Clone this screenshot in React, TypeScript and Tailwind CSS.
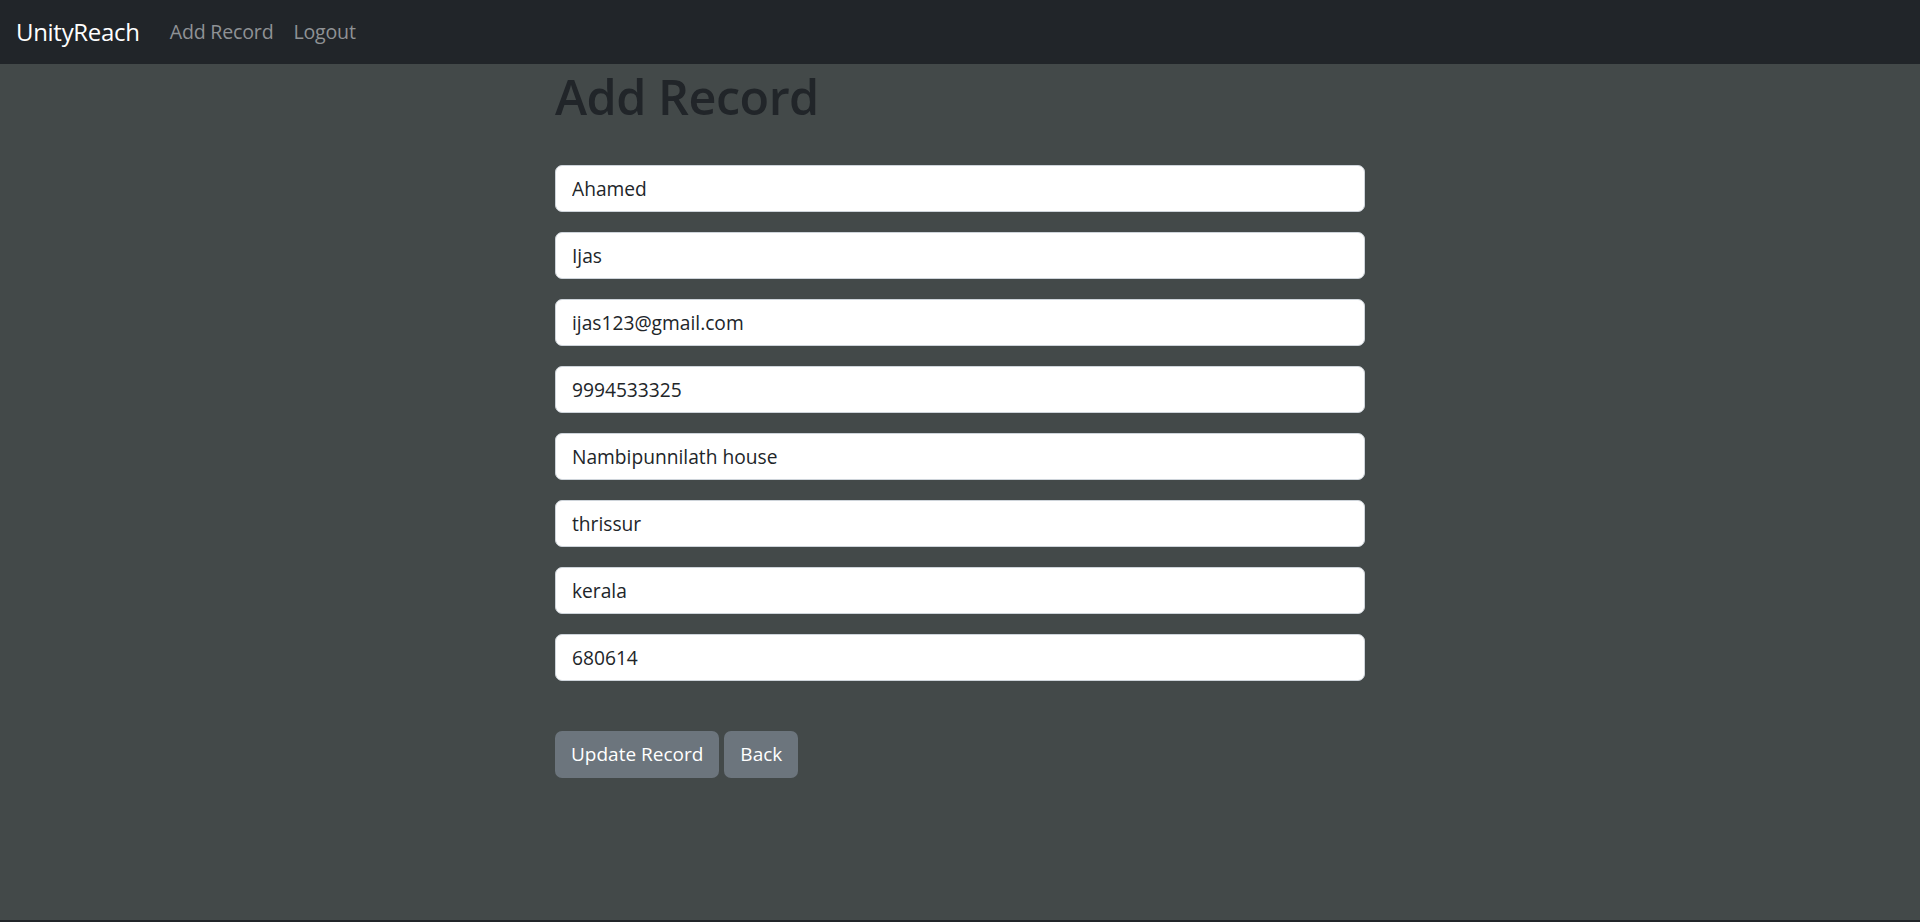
import React, { useState } from "react";

const font = { fontFamily: '"Open Sans", "Noto Sans", "Liberation Sans", sans-serif' };

const initialRecord = [
  "Ahamed",
  "Ijas",
  "ijas123@gmail.com",
  "9994533325",
  "Nambipunnilath house",
  "thrissur",
  "kerala",
  "680614",
];

/**
 * Top navigation bar
 */
const Navbar: React.FC = () => (
  <nav className="h-[64px] min-h-[64px] bg-[#212529] flex items-center px-4">
    <a href="#" className="text-[24px] text-white mr-[30px] tracking-[-0.3px]">
      UnityReach
    </a>
    <a href="#" className="text-[19.6px] text-[#8f9295] mr-[20px] tracking-[-0.2px]">
      Add Record
    </a>
    <a href="#" className="text-[19.6px] text-[#8f9295] tracking-[-0.2px]">
      Logout
    </a>
  </nav>
);

export default function App() {
  const [values, setValues] = useState(initialRecord);

  const update = (i: number, v: string) => {
    setValues((prev) => prev.map((p, idx) => (idx === i ? v : p)));
  };

  return (
    <div className="h-[922px] flex flex-col bg-[#212529]" style={font}>
      <Navbar />

      <main className="flex-1 bg-[#434949]">
        <div className="w-[810px] mx-auto">
          <h1 className="text-[48.5px] leading-[60px] font-semibold text-[#212529] tracking-[-0.5px] mt-[2px]">
            Add Record
          </h1>

          {/* Form fields */}
          <form className="mt-[39px] flex flex-col gap-[20px]" onSubmit={(e) => e.preventDefault()}>
            {values.map((v, i) => (
              <input
                key={i}
                type="text"
                value={v}
                onChange={(e) => update(i, e.target.value)}
                className="h-[47px] w-full bg-white border border-[#ced4da] rounded-[7px] px-[16px] text-[19.2px] text-[#212529] focus:outline-none"
              />
            ))}

            <div className="mt-[30px] flex gap-[5px]">
              <button
                type="submit"
                className="h-[47px] px-[16px] rounded-[7px] bg-[#6c757d] text-white text-[19px]"
              >
                Update Record
              </button>
              <button
                type="button"
                className="h-[47px] px-[16px] rounded-[7px] bg-[#6c757d] text-white text-[19px]"
              >
                Back
              </button>
            </div>
          </form>
        </div>
      </main>

      <div className="h-[2px] bg-[#212529]" />
    </div>
  );
}
